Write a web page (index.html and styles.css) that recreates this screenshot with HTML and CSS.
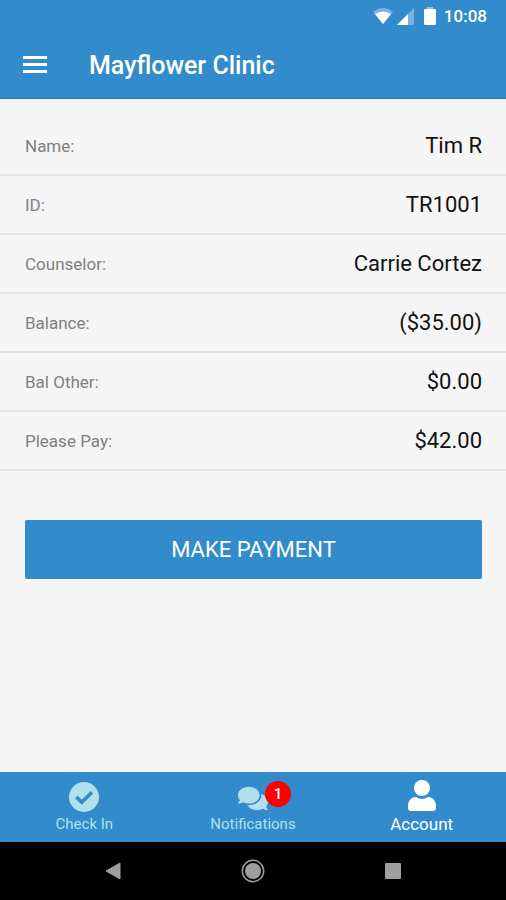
FILE: index.html
```
<!DOCTYPE html>
<html lang="en">
<head>
    <meta charset="utf-8">
    <title>Mayflower Clinic</title>
    <meta name="viewport" content="width=device-width, initial-scale=1.0">
    <link rel="stylesheet" href="styles.css">
</head>
<body>

    <!-- Header -->
    <header class="header">
        <div class="statusBar">
            <svg class="wifiIcon" viewBox="0 0 20 16" width="20" height="16">
                <path d="M0 4 Q10 -4 20 4 L10 16 Z" fill="#fff" opacity="0.35"/>
                <path d="M2 6 Q10 1 18 6 L10 16 Z" fill="#fff"/>
            </svg>
            <svg class="signalIcon" viewBox="0 0 17 17" width="17" height="17">
                <path d="M17 0 V17 H0 Z" fill="#fff" opacity="0.35"/>
                <path d="M11 6 V17 H0 Z" fill="#fff"/>
            </svg>
            <svg class="batteryIcon" viewBox="0 0 12 19" width="12" height="19">
                <path d="M3 0 H9 V3 H3 Z" fill="#fff" opacity="0.5"/>
                <rect x="0" y="2" width="12" height="16" rx="1" fill="#fff"/>
            </svg>
            <span class="clock">10:08</span>
        </div>
        <div class="titleBar">
            <button class="menuButton" type="button" aria-label="Menu">
                <svg viewBox="0 0 24 18" width="24" height="18">
                    <path d="M0 0 H24 V3 H0 Z M0 7 H24 V10 H0 Z M0 14 H24 V17 H0 Z" fill="#fff"/>
                </svg>
            </button>
            <h1>Mayflower Clinic</h1>
        </div>
    </header>

    <!-- Account details -->
    <main class="content">
        <dl class="details">
            <div class="row"><dt>Name:</dt><dd>Tim R</dd></div>
            <div class="row"><dt>ID:</dt><dd>TR1001</dd></div>
            <div class="row"><dt>Counselor:</dt><dd>Carrie Cortez</dd></div>
            <div class="row"><dt>Balance:</dt><dd>($35.00)</dd></div>
            <div class="row"><dt>Bal Other:</dt><dd>$0.00</dd></div>
            <div class="row"><dt>Please Pay:</dt><dd>$42.00</dd></div>
        </dl>
        <div class="actions">
            <button class="payButton" type="button">MAKE PAYMENT</button>
        </div>
    </main>

    <!-- Tabs -->
    <nav class="tabBar">
        <a class="tab" href="#checkin">
            <svg viewBox="0 0 512 512" width="30" height="30">
                <circle cx="256" cy="256" r="256" fill="currentColor"/>
                <path d="M124 254 L218 346 L392 174" fill="none" stroke="#328bcb" stroke-width="62"/>
            </svg>
            <span>Check In</span>
        </a>
        <a class="tab" href="#notifications">
            <span class="tabIcon">
                <svg viewBox="0 0 576 512" width="30" height="27">
                    <path d="M416 192c0-88.400-93.100-160-208-160S0 103.600 0 192c0 34.300 14.100 65.900 38 92-13.400 30.200-35.500 54.200-35.800 54.500-2.200 2.300-2.800 5.700-1.500 8.700S4.800 352 8 352c36.600 0 66.900-12.300 88.700-25 32.200 15.700 70.300 25 111.300 25 114.900 0 208-71.600 208-160zm122 220c23.900-26 38-57.700 38-92 0-66.900-53.500-124.200-129.300-148.100.900 6.600 1.300 13.300 1.300 20.100 0 105.900-107.700 192-240 192-10.800 0-21.300-.8-31.700-1.900C207.800 439.600 281.800 480 368 480c41 0 79.100-9.200 111.300-25 21.800 12.700 52.100 25 88.700 25 3.200 0 6.100-1.900 7.300-4.800 1.300-2.900.7-6.300-1.500-8.700-.3-.3-22.400-24.200-35.800-54.500z" fill="currentColor"/>
                </svg>
                <span class="badge">1</span>
            </span>
            <span>Notifications</span>
        </a>
        <a class="tab active" href="#account" aria-current="page">
            <svg viewBox="0 0 28 32" width="28" height="32">
                <circle cx="14" cy="8" r="8" fill="currentColor"/>
                <path d="M8 17 C10 18 12 19 14 19 S18 18 20 17 C25 17 28 21 28 26 V28 Q28 31 25 31 H3 Q0 31 0 28 V26 C0 21 3 17 8 17 Z" fill="currentColor"/>
            </svg>
            <span>Account</span>
        </a>
    </nav>

    <!-- System buttons -->
    <div class="systemBar">
        <button type="button" aria-label="Back">
            <svg viewBox="0 0 24 24" width="24" height="24">
                <path d="M19 4 V20 L5 12 Z" fill="#9e9e9e" stroke="#9e9e9e" stroke-linejoin="round"/>
            </svg>
        </button>
        <button type="button" aria-label="Home">
            <svg viewBox="0 0 24 24" width="24" height="24">
                <circle cx="12" cy="12" r="8" fill="#9e9e9e"/>
                <circle cx="12" cy="12" r="10.700" fill="none" stroke="#9e9e9e" stroke-width="1.500"/>
            </svg>
        </button>
        <button type="button" aria-label="Recent apps">
            <svg viewBox="0 0 24 24" width="24" height="24">
                <rect x="4" y="4" width="16" height="16" rx="1" fill="#9e9e9e"/>
            </svg>
        </button>
    </div>

</body>
</html>
```
FILE: styles.css
```
* {
    box-sizing: border-box;
}

body {
    display: flex;
    flex-direction: column;
    min-height: 100vh;
    margin: 0;
    background-color: #f5f5f5;
    font-family: Roboto, "Liberation Sans", sans-serif;
}

button {
    border: none;
    padding: 0;
    background: none;
    font-family: inherit;
    cursor: pointer;
}

svg {
    display: block;
}

.header {
    background-color: #328bcb;
    border-bottom: 1px solid #1c7cbd;
    color: white;
}

.statusBar {
    display: flex;
    justify-content: flex-end;
    align-items: center;
    height: 32px;
    padding: 0 19px;
}

.signalIcon {
    margin-left: 4px;
}

.batteryIcon {
    margin-left: 10px;
}

.clock {
    margin-left: 8px;
    font-size: 17px;
    font-weight: 500;
}

.titleBar {
    display: flex;
    align-items: center;
    gap: 42px;
    height: 66px;
    padding: 0 23px;
}

h1 {
    margin: 0;
    font-size: 25px;
    font-weight: 500;
}

.content {
    flex: 1;
    padding-top: 18px;
}

.details {
    margin: 0;
}

.row {
    display: flex;
    justify-content: space-between;
    align-items: center;
    height: 59px;
    padding: 0 24px 0 25px;
    border-bottom: 2px solid #e4e4e4;
}

dt {
    color: #808080;
    font-size: 17px;
}

dd {
    margin: 0;
    color: #111;
    font-size: 22px;
}

.actions {
    padding: 49px 24px 49px 25px;
}

.payButton {
    width: 100%;
    height: 59px;
    border-radius: 2px;
    background-color: #328bcb;
    color: white;
    font-size: 22px;
}

.tabBar {
    display: flex;
    height: 70px;
    background-color: #328bcb;
}

.tab {
    display: flex;
    flex: 1;
    flex-direction: column;
    justify-content: flex-end;
    align-items: center;
    gap: 2px;
    padding-bottom: 8px;
    color: #b0e0ee;
    font-size: 15px;
    line-height: 20px;
    text-decoration: none;
}

.tab.active {
    color: white;
    font-size: 17px;
}

.tabIcon {
    position: relative;
}

.badge {
    position: absolute;
    top: -4px;
    left: 27px;
    width: 26px;
    height: 26px;
    border-radius: 50%;
    background-color: #f00;
    color: white;
    font-weight: 500;
    line-height: 26px;
    text-align: center;
}

.systemBar {
    display: flex;
    height: 58px;
    padding: 0 43px;
    background-color: black;
}

.systemBar button {
    display: flex;
    flex: 1;
    justify-content: center;
    align-items: center;
}
```
